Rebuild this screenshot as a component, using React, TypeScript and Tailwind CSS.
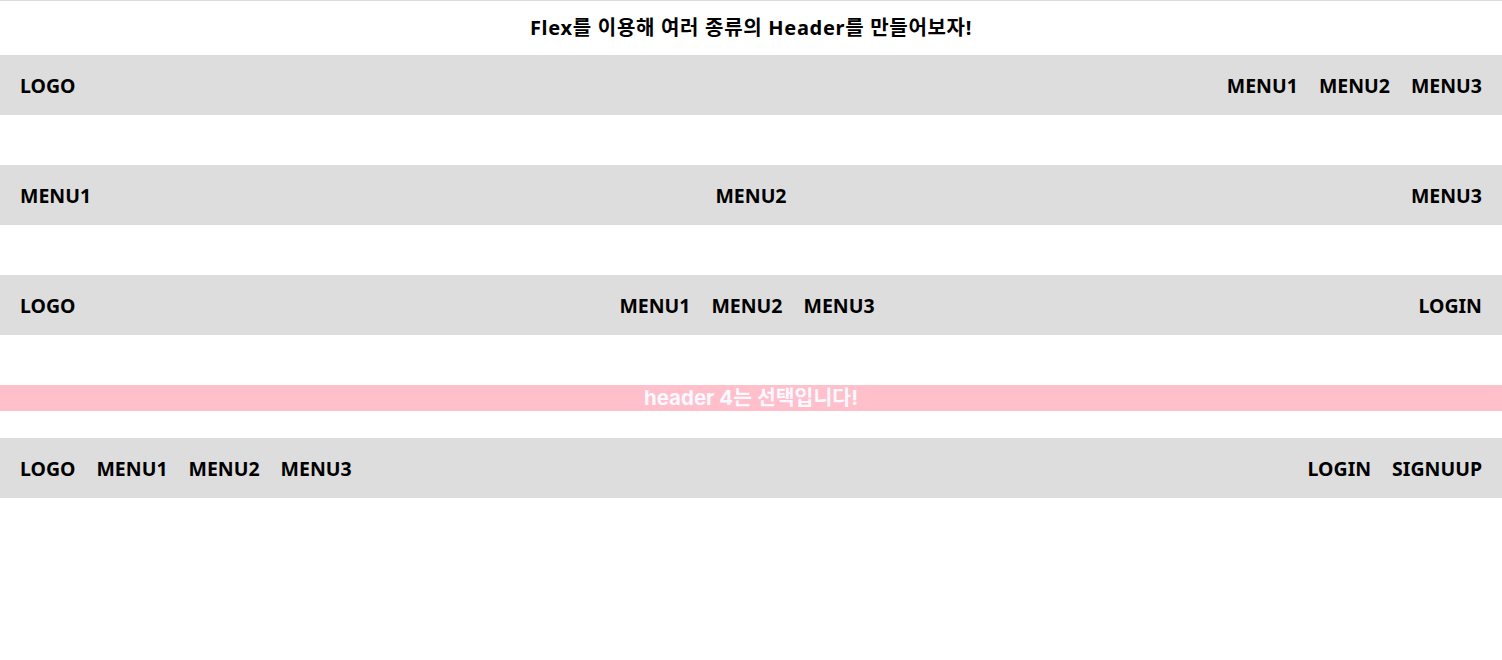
import React from "react";

const font = { fontFamily: '"Noto Sans", "Noto Sans CJK KR", sans-serif' };

function Item({ children }: { children: React.ReactNode }) {
  return <span className="text-[19.5px] font-bold leading-none text-black">{children}</span>;
}

export default function App() {
  return (
    <div className="w-full bg-white" style={font}>
      <div className="h-px w-full bg-[#dddddd]" />
      <div className="flex h-[54px] items-center justify-center text-[20px] font-bold tracking-[0.7px] text-black">
        Flex를 이용해 여러 종류의 Header를 만들어보자!
      </div>

      <div className="flex h-[60px] items-center justify-between bg-[#dddddd] px-5 pt-[2px]">
        <Item>LOGO</Item>
        <div className="flex gap-[21px]">
          <Item>MENU1</Item>
          <Item>MENU2</Item>
          <Item>MENU3</Item>
        </div>
      </div>

      <div className="h-[50px]" />

      <div className="flex h-[60px] items-center justify-between bg-[#dddddd] px-5 pt-[2px]">
        <Item>MENU1</Item>
        <Item>MENU2</Item>
        <Item>MENU3</Item>
      </div>

      <div className="h-[50px]" />

      <div className="flex h-[60px] items-center justify-between bg-[#dddddd] px-5 pt-[2px]">
        <Item>LOGO</Item>
        <div className="flex gap-[21px]">
          <Item>MENU1</Item>
          <Item>MENU2</Item>
          <Item>MENU3</Item>
        </div>
        <Item>LOGIN</Item>
      </div>

      <div className="h-[50px]" />

      <div
        className="flex h-[26px] items-center justify-center bg-[#ffc0cb] text-[20.5px] font-bold leading-none text-[#f8f8ff]"
        style={{ fontFamily: 'Inter, "Noto Sans CJK KR", sans-serif' }}
      >
        header 4는 선택입니다!
      </div>

      <div className="h-[27px]" />

      <div className="flex h-[60px] items-center justify-between bg-[#dddddd] px-5 pt-[2px]">
        <div className="flex gap-[21px]">
          <Item>LOGO</Item>
          <Item>MENU1</Item>
          <Item>MENU2</Item>
          <Item>MENU3</Item>
        </div>
        <div className="flex gap-[21px]">
          <Item>LOGIN</Item>
          <Item>SIGNUUP</Item>
        </div>
      </div>
    </div>
  );
}
